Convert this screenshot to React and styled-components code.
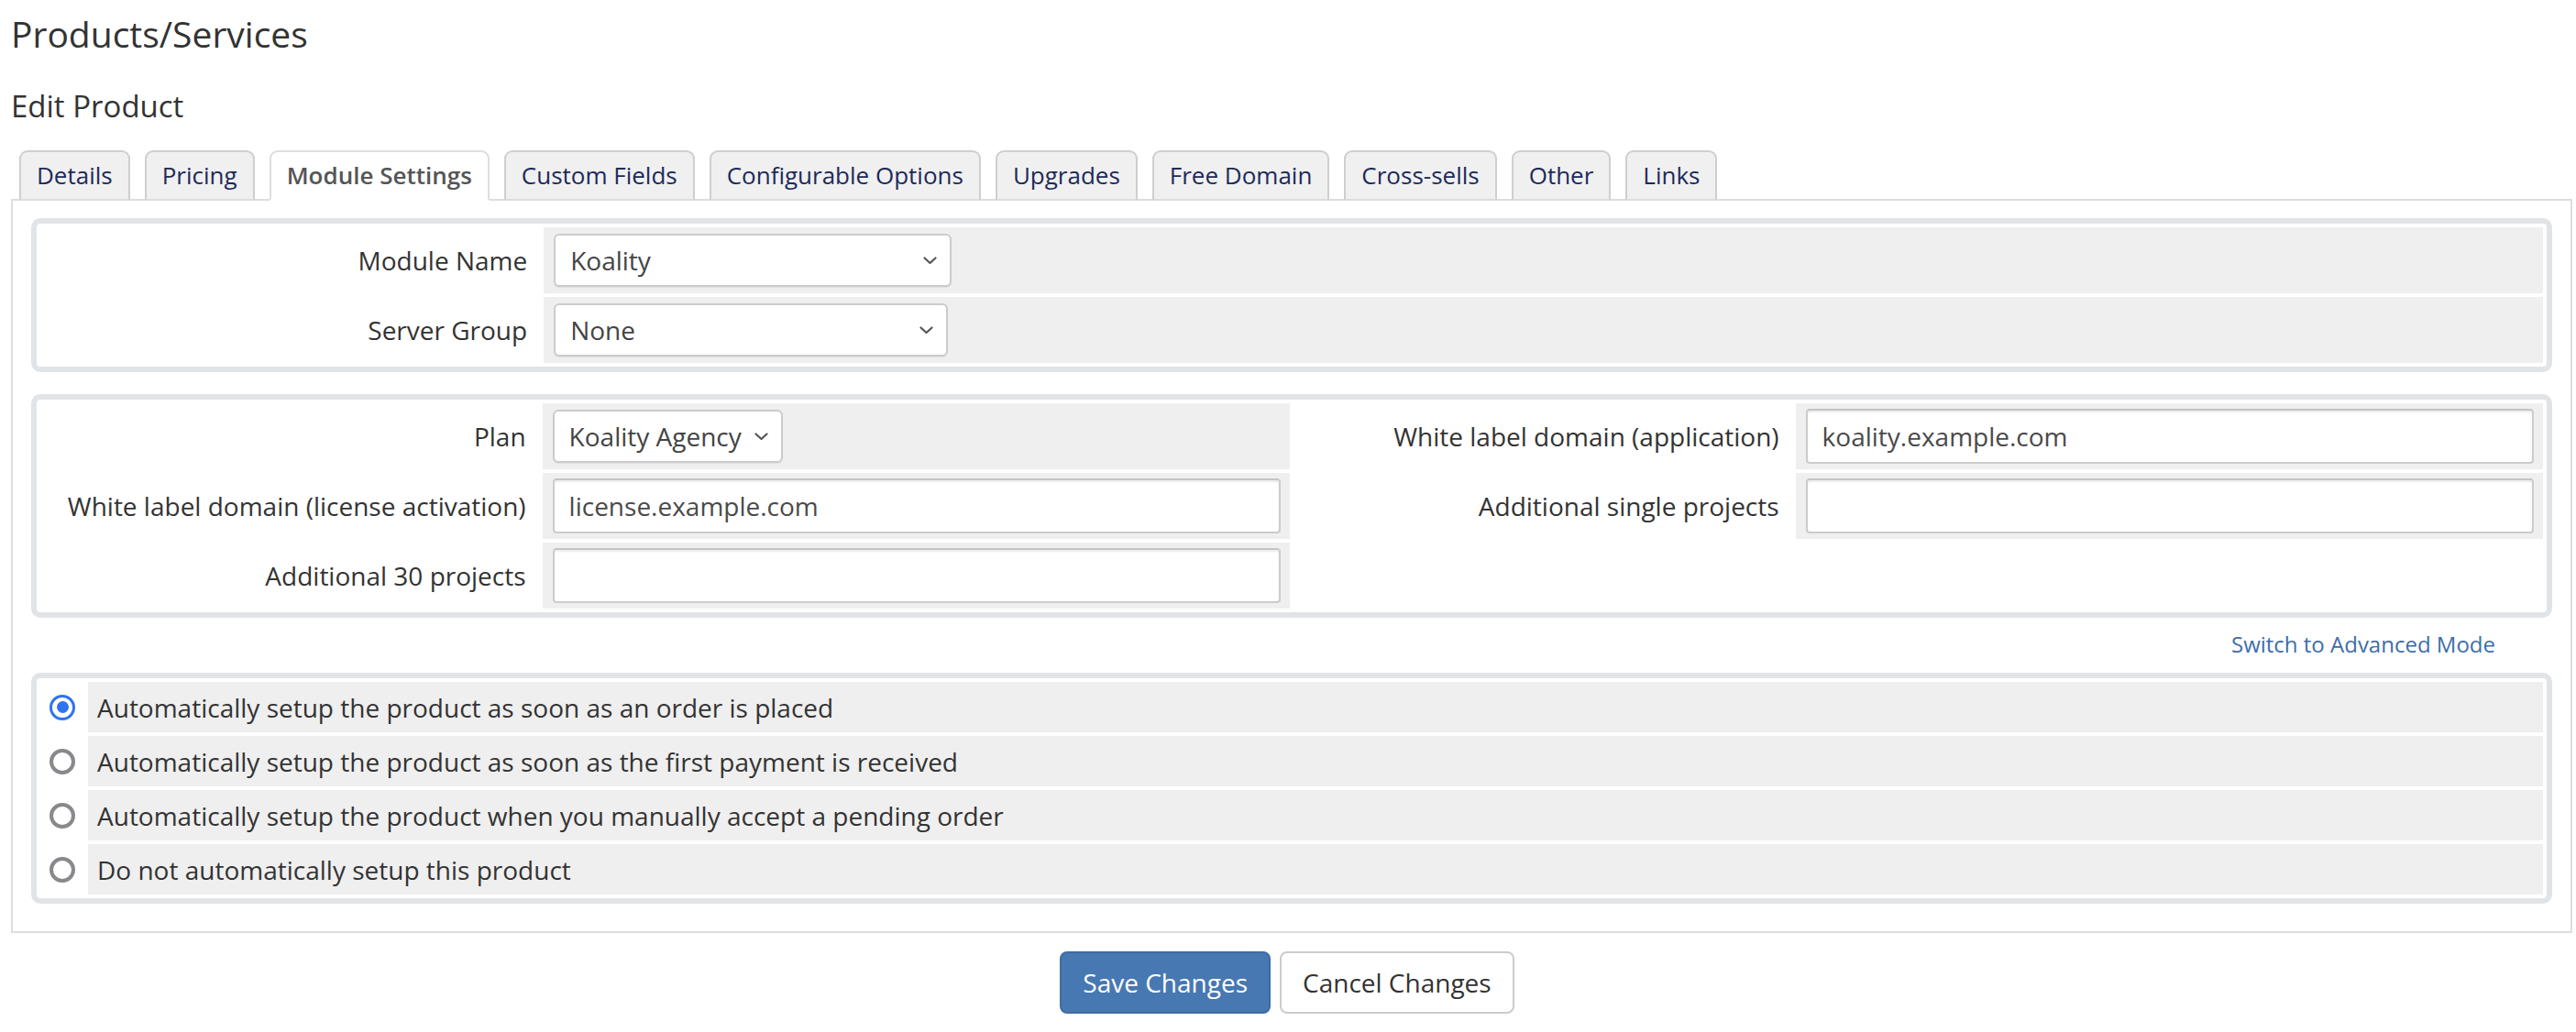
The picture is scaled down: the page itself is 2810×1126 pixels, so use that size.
import React from "react";
import styled, { createGlobalStyle } from "styled-components";

const Global = createGlobalStyle`
  html, body { margin: 0; padding: 0; background: #fff; }
  body { font-family: "Open Sans", "Noto Sans", sans-serif; color: #333; }
  * { box-sizing: border-box; }
`;

const Page = styled.div`
  padding: 15px 4px 20px 12px;
  width: 2810px;
`;

const Title = styled.h1`
  margin: 0;
  font-size: 39px;
  line-height: 44px;
  font-weight: 400;
  color: #333;
`;

const SubTitle = styled.h2`
  margin: 38px 0 0;
  font-size: 33px;
  line-height: 38px;
  font-weight: 400;
  color: #333;
`;

const TabList = styled.div`
  display: flex;
  gap: 16px;
  margin-top: 29px;
  padding-left: 9px;
  position: relative;
  z-index: 1;
`;

const Tab = styled.div`
  height: 55px;
  margin-bottom: -2px;
  padding: 0 17px;
  font-size: 26px;
  line-height: 51px;
  border: 2px solid ${(p) => (p.$active ? "#dedede" : "#cfcfcf")};
  border-bottom: 2px solid ${(p) => (p.$active ? "#fff" : "#dddddd")};
  border-radius: 9px 9px 0 0;
  background: ${(p) => (p.$active ? "#fff" : "#f0f0f0")};
  color: ${(p) => (p.$active ? "#555" : "#1d2a5a")};
  font-weight: ${(p) => (p.$active ? 600 : 400)};
  white-space: nowrap;
`;

const TabContent = styled.div`
  border: 2px solid #dddddd;
  padding: 19px 20px 30px;
`;

const Fieldset = styled.div`
  border: 6px solid #e1e4e7;
  border-radius: 10px;
  padding: 4px;
  display: grid;
  gap: 4px;
  grid-template-columns: ${(p) => p.$cols};
  margin-top: ${(p) => p.$mt || 0}px;
`;

const Label = styled.div`
  height: 72px;
  display: flex;
  align-items: center;
  justify-content: flex-end;
  padding-right: 14px;
  font-size: 28px;
  color: #333;
  white-space: nowrap;
`;

const FieldCell = styled.div`
  height: 72px;
  background: #efefef;
  display: flex;
  align-items: center;
  padding: 0 10px 0 11px;
`;

const SelectBox = styled.div`
  width: ${(p) => p.$w}px;
  height: 58px;
  border: 2px solid #cbcbcb;
  border-radius: 6px;
  background: #fff;
  box-shadow: 0 1px 1px rgba(0, 0, 0, 0.06);
  display: flex;
  align-items: center;
  justify-content: space-between;
  padding: 0 14px 0 16px;
  font-size: 28px;
  color: #444;
`;

const TextInput = styled.div`
  width: 100%;
  height: 60px;
  border: 2px solid #cccccc;
  border-top-color: #c4c4c4;
  border-radius: 4px;
  background: #fff;
  box-shadow: inset 0 2px 2px rgba(0, 0, 0, 0.08);
  display: flex;
  align-items: center;
  padding: 0 16px;
  font-size: 28px;
  color: #4a4a4a;
`;

const LinkRow = styled.div`
  margin-top: 14px;
  text-align: right;
  padding-right: 62px;
  font-size: 24px;
  line-height: 30px;
`;

const Link = styled.a`
  color: #3c6ea9;
  text-decoration: none;
`;

const RadioCell = styled.div`
  height: 55px;
  display: flex;
  align-items: center;
  justify-content: center;
`;

const Radio = styled.span`
  width: 28px;
  height: 28px;
  border-radius: 50%;
  border: ${(p) => (p.$checked ? "3px solid #2f74ee" : "4px solid #88888d")};
  background: #fff;
  display: flex;
  align-items: center;
  justify-content: center;
  &::after {
    content: "";
    display: ${(p) => (p.$checked ? "block" : "none")};
    width: 13px;
    height: 13px;
    border-radius: 50%;
    background: #2f74ee;
  }
`;

const OptionCell = styled.div`
  height: 55px;
  background: #efefef;
  display: flex;
  align-items: center;
  padding-left: 10px;
  font-size: 28px;
  color: #333;
`;

const ButtonRow = styled.div`
  display: flex;
  justify-content: center;
  gap: 10px;
  margin-top: 20px;
  padding-right: 10px;
`;

const Button = styled.button`
  height: 68px;
  padding: 0 23px;
  font-family: "Open Sans", sans-serif;
  font-size: 28px;
  border-radius: 8px;
  border: 2px solid ${(p) => (p.$primary ? "#3f6ca5" : "#cccccc")};
  background: ${(p) => (p.$primary ? "#4878b1" : "#fff")};
  color: ${(p) => (p.$primary ? "#fff" : "#333")};
  cursor: pointer;
`;

const Chevron = () => (
  <svg width="15" height="9" viewBox="0 0 15 9" fill="none">
    <path d="M1.5 1.5 L7.5 7 L13.5 1.5" stroke="#555" strokeWidth="2.2" strokeLinecap="round" strokeLinejoin="round" />
  </svg>
);

const Select = ({ value, w }) => (
  <SelectBox $w={w}>
    <span>{value}</span>
    <Chevron />
  </SelectBox>
);

const tabs = [
  "Details",
  "Pricing",
  "Module Settings",
  "Custom Fields",
  "Configurable Options",
  "Upgrades",
  "Free Domain",
  "Cross-sells",
  "Other",
  "Links",
];

const options = [
  "Automatically setup the product as soon as an order is placed",
  "Automatically setup the product as soon as the first payment is received",
  "Automatically setup the product when you manually accept a pending order",
  "Do not automatically setup this product",
];

export default function App() {
  return (
    <>
      <Global />
      <Page>
        <Title>Products/Services</Title>
        <SubTitle>Edit Product</SubTitle>
        <TabList>
          {tabs.map((t) => (
            <Tab key={t} $active={t === "Module Settings"}>
              {t}
            </Tab>
          ))}
        </TabList>
        <TabContent>
          <Fieldset $cols="2fr 8fr">
            <Label>Module Name</Label>
            <FieldCell>
              <Select value="Koality" w={434} />
            </FieldCell>
            <Label>Server Group</Label>
            <FieldCell>
              <Select value="None" w={430} />
            </FieldCell>
          </Fieldset>

          <Fieldset $cols="2fr 3fr 2fr 3fr" $mt={24}>
            <Label>Plan</Label>
            <FieldCell>
              <Select value="Koality Agency" w={251} />
            </FieldCell>
            <Label>White label domain (application)</Label>
            <FieldCell>
              <TextInput>koality.example.com</TextInput>
            </FieldCell>
            <Label>White label domain (license activation)</Label>
            <FieldCell>
              <TextInput>license.example.com</TextInput>
            </FieldCell>
            <Label>Additional single projects</Label>
            <FieldCell>
              <TextInput />
            </FieldCell>
            <Label>Additional 30 projects</Label>
            <FieldCell>
              <TextInput />
            </FieldCell>
          </Fieldset>

          <LinkRow>
            <Link href="#">Switch to Advanced Mode</Link>
          </LinkRow>

          <Fieldset $cols="48px 1fr" $mt={16}>
            {options.map((o, i) => (
              <React.Fragment key={o}>
                <RadioCell>
                  <Radio $checked={i === 0} />
                </RadioCell>
                <OptionCell>{o}</OptionCell>
              </React.Fragment>
            ))}
          </Fieldset>
        </TabContent>
        <ButtonRow>
          <Button $primary>Save Changes</Button>
          <Button>Cancel Changes</Button>
        </ButtonRow>
      </Page>
    </>
  );
}
